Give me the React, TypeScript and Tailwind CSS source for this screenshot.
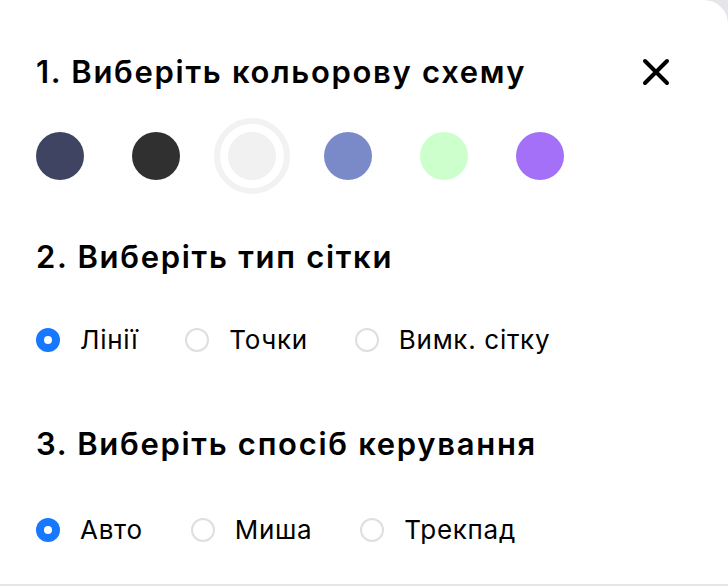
import { useState } from "react"

const colors = ["#3f4462", "#303030", "#f1f1f1", "#7a89c8", "#ccffcc", "#a370f7"]

function Radio({ label, checked, onClick }: { label: string; checked: boolean; onClick: () => void }) {
  return (
    <button type="button" onClick={onClick} className="flex items-center gap-5">
      {checked ? (
        <span className="flex h-6 w-6 items-center justify-center rounded-full bg-[#1677ff]">
          <span className="h-2 w-2 rounded-full bg-white" />
        </span>
      ) : (
        <span className="h-6 w-6 rounded-full border-2 border-[#dedee3] bg-white" />
      )}
      <span className="text-[26px] leading-8 tracking-[0.7px] text-black">{label}</span>
    </button>
  )
}

export default function App() {
  const [scheme, setScheme] = useState(2)
  const [grid, setGrid] = useState("Лінії")
  const [control, setControl] = useState("Авто")

  return (
    <div
      className="h-[586px] w-[728px] overflow-hidden bg-[#e5e5ea]"
      style={{ fontFamily: "Inter, 'Noto Sans', sans-serif" }}
    >
      <div className="flex h-[584px] flex-col rounded-tr-[24px] bg-white pl-9 pr-[58px] pt-[54px]">
        {/* Header */}
        <div className="flex items-center justify-between">
          <h2 className="text-[31px] font-semibold leading-9 tracking-[1.7px] text-black">1. Виберіть кольорову схему</h2>
          <button type="button" className="text-black">
            <svg width="28" height="28" viewBox="0 0 28 28" fill="none" stroke="currentColor" strokeWidth="4" strokeLinecap="round">
              <path d="M3 3 L25 25 M25 3 L3 25" />
            </svg>
          </button>
        </div>

        {/* Color swatches */}
        <div className="-ml-[14px] mt-7 flex h-[76px] items-center gap-5">
          {colors.map((c, i) => (
            <button
              key={c}
              type="button"
              onClick={() => setScheme(i)}
              className={
                "flex h-[76px] w-[76px] items-center justify-center rounded-full " +
                (scheme === i ? "border-[6px] border-[#f2f2f2]" : "")
              }
            >
              <span className="h-12 w-12 rounded-full" style={{ backgroundColor: c }} />
            </button>
          ))}
        </div>

        <h2 className="mt-[45px] text-[31px] font-semibold leading-9 tracking-[1.7px] text-black">2. Виберіть тип сітки</h2>
        <div className="mt-[49px] flex items-center gap-[47px]">
          {["Лінії", "Точки", "Вимк. сітку"].map((l) => (
            <Radio key={l} label={l} checked={grid === l} onClick={() => setGrid(l)} />
          ))}
        </div>

        <h2 className="mt-[70px] text-[31px] font-semibold leading-9 tracking-[1.7px] text-black">3. Виберіть спосіб керування</h2>
        <div className="mt-[52px] flex items-center gap-[48px]">
          {["Авто", "Миша", "Трекпад"].map((l) => (
            <Radio key={l} label={l} checked={control === l} onClick={() => setControl(l)} />
          ))}
        </div>
      </div>
    </div>
  )
}
